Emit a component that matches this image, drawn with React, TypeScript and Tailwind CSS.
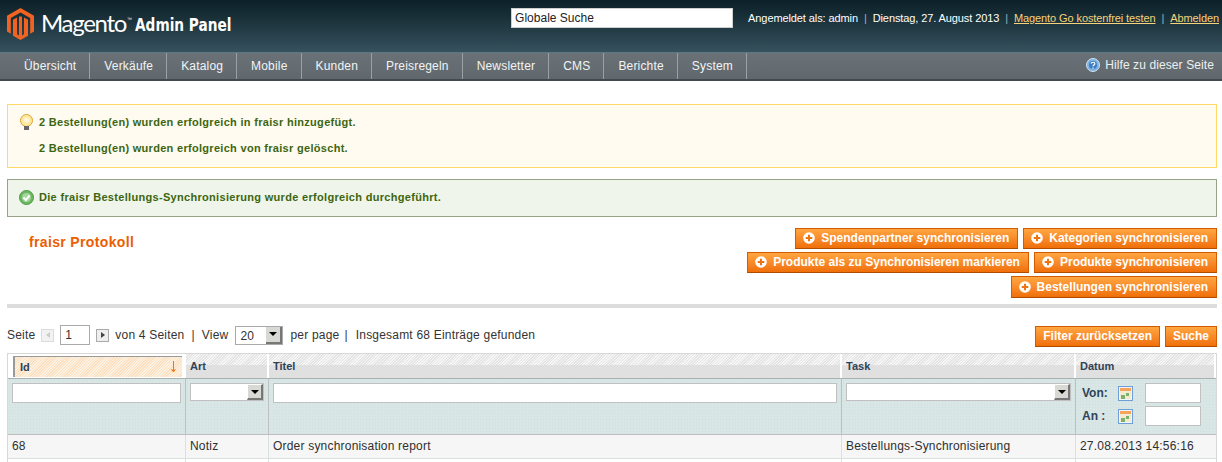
import type { ReactNode } from "react";

const menu = ["Übersicht", "Verkäufe", "Katalog", "Mobile", "Kunden", "Preisregeln", "Newsletter", "CMS", "Berichte", "System"];

function Logo() {
  return (
    <svg width="27" height="32" viewBox="0 0 27 32" className="shrink-0">
      <path fill="#f26322" d="M13.500 0 27 7.800v15.800l-3.800 2.200V10L13.500 4.400 3.800 10v15.800L0 23.600V7.800z" />
      <path fill="#f26322" d="M13.500 32 6 27.700V11.800l4-2.300v16.800l2 1.100V8.500h3v18.900l2-1.100V9.500l4 2.300v15.900z" />
    </svg>
  );
}

function PlusIcon() {
  return (
    <svg width="12" height="12" viewBox="0 0 12 12" className="shrink-0">
      <circle cx="6" cy="6" r="5.800" fill="#fff" />
      <path d="M6 2.700v6.600M2.700 6h6.600" stroke="#ee7410" strokeWidth="2" />
    </svg>
  );
}

function Button({ label, plus = true, tall }: { label: string; plus?: boolean; tall?: boolean }) {
  return (
    <button
      className={`flex items-center gap-[6px] border border-[#d35c00] border-b-[#b04c00] bg-gradient-to-b from-[#ffa640] to-[#f06f06] pb-px text-[12px] font-bold text-white ${
        plus ? "pl-[7px] pr-2" : "px-[7px]"
      } ${tall ? "h-[22px]" : "h-[21px]"}`}
    >
      {plus && <PlusIcon />}
      {label}
    </button>
  );
}

function SelectBox({ className }: { className: string }) {
  return (
    <div className={`flex h-[18px] items-stretch justify-between border border-[#c0c0c0] bg-white ${className}`}>
      <span />
      <span className="flex w-4 items-center justify-center border-l border-t border-white bg-[#d8d8d4] border-r-2 border-b-2 border-r-[#777] border-b-[#777]">
        <span className="border-x-[4px] border-t-[4px] border-x-transparent border-t-black" />
      </span>
    </div>
  );
}

function CalendarIcon() {
  return (
    <svg width="15" height="15" viewBox="0 0 15 15" className="shrink-0">
      <rect x="0.500" y="0.500" width="14" height="14" fill="#eef4f8" stroke="#6f9fd8" />
      <rect x="2" y="2" width="11" height="3" fill="#f7a35c" />
      <rect x="2" y="5" width="11" height="8" fill="#f3ead2" />
      <rect x="3" y="9" width="4" height="4" fill="#7cb06c" />
      <rect x="8" y="7" width="3" height="3" fill="#7cb06c" />
    </svg>
  );
}

function Bulb() {
  return (
    <svg width="15" height="17" viewBox="0 0 15 17" className="shrink-0">
      <circle cx="7.500" cy="6.500" r="6" fill="#fde9a0" stroke="#e0a030" />
      <circle cx="7.500" cy="6" r="2.500" fill="#fff8dc" />
      <rect x="5" y="12" width="5" height="4" fill="#666" />
    </svg>
  );
}

function Check() {
  return (
    <svg width="15" height="15" viewBox="0 0 15 15" className="shrink-0">
      <circle cx="7.500" cy="7.500" r="7" fill="#6cb862" stroke="#4d9a48" />
      <circle cx="7.500" cy="7.500" r="4.500" fill="#a3d79b" />
      <path d="M4.500 7.500 6.800 10l3.800-4.500" stroke="#fff" strokeWidth="2" fill="none" />
    </svg>
  );
}

function HeadCell({ children, sorted }: { children: ReactNode; sorted?: boolean }) {
  if (sorted) {
    return (
      <div className="border-r-2 border-white pl-[5px] pr-[2px] pt-[2px] pb-[1px]">
        <div className="flex h-[21px] items-center justify-between border-l-2 border-t border-[#9a9a9a] bg-[repeating-linear-gradient(135deg,#fce0c2_0,#fce0c2_1px,#fdf2e2_1px,#fdf2e2_2px)] pl-[5px] pr-[5px] text-[11px] font-bold text-[#2f4358]">
          {children}
          <svg width="7" height="14" viewBox="0 0 7 14">
            <path d="M3.500 1v10M1.500 9l2 3 2-3" stroke="#f4730b" strokeWidth="1" fill="none" />
          </svg>
        </div>
      </div>
    );
  }
  return (
    <div className="flex h-[24px] flex-col border-r-2 border-white bg-[linear-gradient(#0000_11px,#e0e0e0_11px),repeating-linear-gradient(135deg,#e4e4e4_0,#e4e4e4_1px,#f6f6f6_1px,#f6f6f6_2px)] pl-[4px] pt-[4px] text-[11px] font-bold text-[#2f4358]">
      {children}
    </div>
  );
}

const filterCell = "border-r border-[#bfbfbf] bg-[#d8e6e6] bg-[radial-gradient(#cfdfdf_1px,transparent_1px)] bg-[length:3px_3px]";
const input = "block border border-[#c0c0c0] bg-white";
const dataCell = "border-r border-[#dadfe0] px-[4px] pt-[2px] text-[12px] tracking-[0.2px] text-[#2f2f2f]";

export default function App() {
  return (
    <div className="min-h-[462px] overflow-hidden bg-white font-['Liberation_Sans',Arial,sans-serif] text-[12px] text-[#2f2f2f]">
      <header className="flex h-[52px] bg-gradient-to-b from-[#0c2027] to-[#35525e] pl-[7px]">
        <div className="flex items-start pt-2">
          <Logo />
          <span className="ml-[7px] mt-[-1px] font-['Lato',sans-serif] text-[24px] leading-[32px] tracking-[-1.3px] text-white">Magento</span>
          <span className="ml-px mt-[8px] text-[5px] text-white">™</span>
          <span className="ml-[3px] mt-[5px] origin-left scale-x-[0.76] font-['DejaVu_Sans',sans-serif] text-[18px] font-bold leading-[24px] text-white">Admin Panel</span>
        </div>
        <div className="ml-auto flex items-start pr-[3px] pt-2">
          <input
            readOnly
            value="Globale Suche"
            className="mr-[15px] h-[20px] w-[222px] border border-[#cfcfcf] bg-white pl-[3px] text-[12px] text-[#222]"
          />
          <div className="flex h-[20px] items-center whitespace-nowrap text-[11px] tracking-[-0.1px] text-white">
            Angemeldet als: admin
            <span className="mx-[6px] text-[#9fb2b8]">|</span>
            Dienstag, 27. August 2013
            <span className="mx-[6px] text-[#9fb2b8]">|</span>
            <a className="text-[#f6d27a] underline">Magento Go kostenfrei testen</a>
            <span className="mx-[6px] text-[#9fb2b8]">|</span>
            <a className="text-[#f6d27a] underline">Abmelden</a>
          </div>
        </div>
      </header>
      <nav className="flex h-[29px] items-stretch justify-between border-t border-[#5f7a82] border-b-2 border-b-[#424a4e] bg-gradient-to-b from-[#6a7277] to-[#60686d] pl-[10px] pr-[8px]">
        <ul className="flex">
          {menu.map((item) => (
            <li key={item} className="flex items-center border-r border-[#9aa1a5] pl-[14px] pr-[13px] text-[12px] tracking-[0.18px] text-[#f2f4f4]">
              {item}
            </li>
          ))}
        </ul>
        <div className="flex items-center gap-[5px] pb-[2px] text-[12px] tracking-[0.1px] text-[#eef0f0]">
          <svg width="14" height="14" viewBox="0 0 14 14">
            <circle cx="7" cy="7" r="6.500" fill="#7fb2e4" stroke="#cfe2f2" />
            <circle cx="7" cy="7" r="4" fill="#3f7fc0" />
            <path d="M5.200 5.600C5.400 3.800 8.800 3.800 8.800 5.700 8.800 7 7 7 7 8.300M7 9.500v1.200" stroke="#fff" strokeWidth="1.200" fill="none" />
          </svg>
          Hilfe zu dieser Seite
        </div>
      </nav>
      <main className="pl-[7px] pr-[5px] pt-[23px]">
        <div className="flex h-[64px] flex-col border border-[#ffd967] bg-[#fffbf0] pl-[11px] pt-[9px] text-[11px] font-bold tracking-[0.3px] text-[#3d6611]">
          <div className="flex items-center gap-[5px]">
            <Bulb />
            2 Bestellung(en) wurden erfolgreich in fraisr hinzugefügt.
          </div>
          <div className="pl-5 pt-[9px]">2 Bestellung(en) wurden erfolgreich von fraisr gelöscht.</div>
        </div>
        <div className="mt-[11px] flex h-[38px] items-center gap-[5px] border border-[#95a486] bg-[#eff5ea] pb-px pl-[11px] text-[11px] font-bold tracking-[0.31px] text-[#3d6611]">
          <Check />
          Die fraisr Bestellungs-Synchronisierung wurde erfolgreich durchgeführt.
        </div>
        <div className="mt-[11px] flex justify-between">
          <h3 className="pl-[22px] pt-[4px] text-[14px] font-bold tracking-[0.35px] text-[#eb5e00]">fraisr Protokoll</h3>
          <div className="flex flex-col items-end gap-[3px]">
            <div className="flex gap-[5px]">
              <Button label="Spendenpartner synchronisieren" />
              <Button label="Kategorien synchronisieren" />
            </div>
            <div className="flex gap-[5px]">
              <Button label="Produkte als zu Synchronisieren markieren" />
              <Button label="Produkte synchronisieren" />
            </div>
            <Button label="Bestellungen synchronisieren" tall />
          </div>
        </div>
        <div className="mt-[6px] h-1 bg-[#dddddd]" />
        <div className="mt-[17px] flex h-[22px] items-center justify-between">
          <div className="flex items-center whitespace-nowrap pb-[2px] text-[12px] tracking-[0.2px] text-[#333]">
            Seite
            <span className="ml-[6px] flex h-[13px] w-[13px] items-center justify-center border border-[#dcdcdc] bg-[#f2f2f2]">
              <span className="border-y-[3px] border-r-[4px] border-y-transparent border-r-[#ccc]" />
            </span>
            <input readOnly value="1" className="ml-[6px] h-[20px] w-[30px] border border-[#aaa] pl-1 text-[12px]" />
            <span className="ml-[6px] flex h-[13px] w-[13px] items-center justify-center border border-[#aaa] bg-[#eee]">
              <span className="border-y-[3px] border-l-[4px] border-y-transparent border-l-[#444]" />
            </span>
            <span className="ml-[6px]">von 4 Seiten</span>
            <span className="mx-[7px]">|</span>
            <span>View</span>
            <div className="ml-[7px] flex h-[19px] w-[48px] items-stretch justify-between border border-[#aaa] bg-white pl-1">
              20
              <span className="flex w-4 items-center justify-center border-r-2 border-b-2 border-r-[#777] border-b-[#777] bg-[#d8d8d4]">
                <span className="border-x-[4px] border-t-[4px] border-x-transparent border-t-black" />
              </span>
            </div>
            <span className="ml-[7px]">per page</span>
            <span className="mx-[5px]">|</span>
            <span className="ml-[3px]">Insgesamt 68 Einträge gefunden</span>
          </div>
          <div className="flex gap-[5px]">
            <Button label="Filter zurücksetzen" plus={false} />
            <Button label="Suche" plus={false} />
          </div>
        </div>
        <div className="mt-[6px] border border-[#d8d8d8] border-b-0">
          <div className="grid grid-cols-[178px_83px_573px_234px_1fr] border-b border-[#a8b0b0]">
            <HeadCell sorted>Id</HeadCell>
            <HeadCell>Art</HeadCell>
            <HeadCell>Titel</HeadCell>
            <HeadCell>Task</HeadCell>
            <HeadCell>Datum</HeadCell>
          </div>
          <div className="grid h-[56px] grid-cols-[178px_83px_573px_234px_1fr] border-b border-[#bdbdbd]">
            <div className={`${filterCell} px-[4px] pt-[4px]`}>
              <div className={`${input} h-[20px] w-[169px]`} />
            </div>
            <div className={`${filterCell} px-[4px] pt-[4px]`}>
              <SelectBox className="w-[74px]" />
            </div>
            <div className={`${filterCell} px-[4px] pt-[4px]`}>
              <div className={`${input} h-[20px] w-[564px]`} />
            </div>
            <div className={`${filterCell} px-[4px] pt-[4px]`}>
              <SelectBox className="w-[225px]" />
            </div>
            <div className={`${filterCell} border-r-0 pl-[6px] pt-[4px] text-[12px] font-bold text-[#2f4358]`}>
              <div className="flex h-[20px] items-center">
                <span className="w-[36px]">Von:</span>
                <CalendarIcon />
                <span className={`${input} ml-[12px] h-[20px] w-[56px]`} />
              </div>
              <div className="mt-[3px] flex h-[20px] items-center">
                <span className="w-[36px]">An :</span>
                <CalendarIcon />
                <span className={`${input} ml-[12px] h-[20px] w-[56px]`} />
              </div>
            </div>
          </div>
          <div className="grid h-[24px] grid-cols-[178px_83px_573px_234px_1fr] border-b border-[#dadfe0] bg-[#f6f6f6]">
            <div className={dataCell}>68</div>
            <div className={dataCell}>Notiz</div>
            <div className={dataCell}>Order synchronisation report</div>
            <div className={dataCell}>Bestellungs-Synchronisierung</div>
            <div className={`${dataCell} border-r-0`}>27.08.2013 14:56:16</div>
          </div>
          <div className="grid h-[20px] grid-cols-[178px_83px_573px_234px_1fr]">
            <div className="border-r border-[#dadfe0]" />
            <div className="border-r border-[#dadfe0]" />
            <div className="border-r border-[#dadfe0]" />
            <div className="border-r border-[#dadfe0]" />
            <div />
          </div>
        </div>
      </main>
    </div>
  );
}
